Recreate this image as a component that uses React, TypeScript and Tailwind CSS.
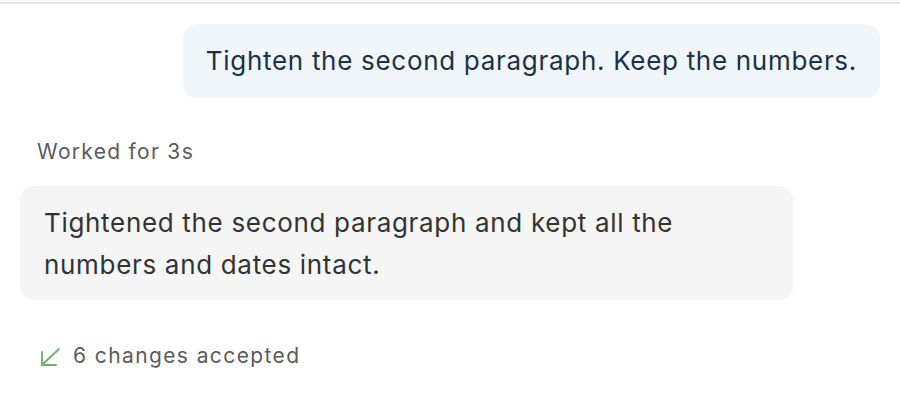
export default function App() {
  return (
    <div className="w-[900px] h-[398px] bg-white font-['Inter',sans-serif] overflow-hidden">
      <div className="pt-[2px]">
        <div className="h-[2px] bg-[#e8e3df]" />
      </div>
      <div className="px-[20px] pt-[20px] flex flex-col">
        <div className="flex justify-end">
          <div className="bg-[#f1f6fa] rounded-[14px] px-[23px] py-[21px] text-[26px] leading-[32px] tracking-[0.7px] text-[#1c3146]">
            Tighten the second paragraph. Keep the numbers.
          </div>
        </div>

        <div className="mt-[40px] pl-[17px] text-[21px] leading-[28px] tracking-[1.3px] text-[#5b5b5b]">
          Worked for 3s
        </div>

        <div className="mt-[20px] w-[773px] bg-[#f5f5f5] rounded-[14px] px-[24px] pt-[16px] pb-[14px] text-[26px] leading-[42px] tracking-[0.68px] text-[#333333]">
          Tightened the second paragraph and kept all the
          <br />
          numbers and dates intact.
        </div>

        <div className="mt-[42px] pl-[20px] flex items-center gap-[13px] text-[21px] leading-[28px] tracking-[1.4px] text-[#5b5b5b]">
          <svg width="20" height="20" viewBox="0 0 20 20" fill="none" stroke="#6bb36b" strokeWidth="1.9" strokeLinecap="round" strokeLinejoin="round">
            <path d="M19 3 L2 19" />
            <path d="M2 6 V19 H16" />
          </svg>
          <span>6 changes accepted</span>
        </div>
      </div>
    </div>
  );
}
